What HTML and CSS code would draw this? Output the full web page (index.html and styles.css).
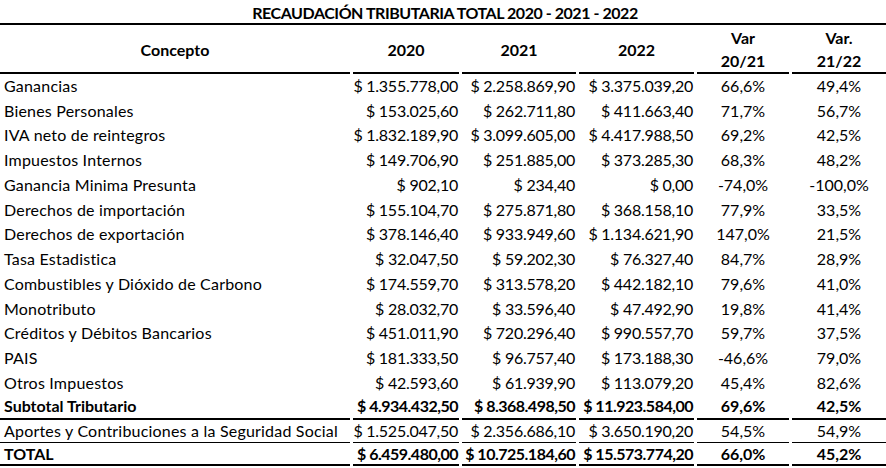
FILE: index.html
```html
<!DOCTYPE html>
<html lang="es">
<head>
<meta charset="utf-8">
<title>Recaudación Tributaria</title>
<link rel="stylesheet" href="styles.css">
</head>
<body>
<div class="sheet">
  <div class="title">RECAUDACIÓN TRIBUTARIA TOTAL 2020 - 2021 - 2022</div>
  <div class="row head">
    <div class="c concept">Concepto</div>
    <div class="c">2020</div>
    <div class="c">2021</div>
    <div class="c">2022</div>
    <div class="c"><span>Var</span><span>20/21</span></div>
    <div class="c"><span>Var.</span><span>21/22</span></div>
  </div>
  <div class="row"><div class="c label">Ganancias</div><div class="c num">$ 1.355.778,00</div><div class="c num">$ 2.258.869,90</div><div class="c num">$ 3.375.039,20</div><div class="c pct">66,6%</div><div class="c pct">49,4%</div></div>
  <div class="row"><div class="c label">Bienes Personales</div><div class="c num">$ 153.025,60</div><div class="c num">$ 262.711,80</div><div class="c num">$ 411.663,40</div><div class="c pct">71,7%</div><div class="c pct">56,7%</div></div>
  <div class="row"><div class="c label">IVA neto de reintegros</div><div class="c num">$ 1.832.189,90</div><div class="c num">$ 3.099.605,00</div><div class="c num">$ 4.417.988,50</div><div class="c pct">69,2%</div><div class="c pct">42,5%</div></div>
  <div class="row"><div class="c label">Impuestos Internos</div><div class="c num">$ 149.706,90</div><div class="c num">$ 251.885,00</div><div class="c num">$ 373.285,30</div><div class="c pct">68,3%</div><div class="c pct">48,2%</div></div>
  <div class="row"><div class="c label">Ganancia Minima Presunta</div><div class="c num">$ 902,10</div><div class="c num">$ 234,40</div><div class="c num">$ 0,00</div><div class="c pct">-74,0%</div><div class="c pct">-100,0%</div></div>
  <div class="row"><div class="c label">Derechos de importación</div><div class="c num">$ 155.104,70</div><div class="c num">$ 275.871,80</div><div class="c num">$ 368.158,10</div><div class="c pct">77,9%</div><div class="c pct">33,5%</div></div>
  <div class="row"><div class="c label">Derechos de exportación</div><div class="c num">$ 378.146,40</div><div class="c num">$ 933.949,60</div><div class="c num">$ 1.134.621,90</div><div class="c pct">147,0%</div><div class="c pct">21,5%</div></div>
  <div class="row"><div class="c label">Tasa Estadistica</div><div class="c num">$ 32.047,50</div><div class="c num">$ 59.202,30</div><div class="c num">$ 76.327,40</div><div class="c pct">84,7%</div><div class="c pct">28,9%</div></div>
  <div class="row"><div class="c label">Combustibles y Dióxido de Carbono</div><div class="c num">$ 174.559,70</div><div class="c num">$ 313.578,20</div><div class="c num">$ 442.182,10</div><div class="c pct">79,6%</div><div class="c pct">41,0%</div></div>
  <div class="row"><div class="c label">Monotributo</div><div class="c num">$ 28.032,70</div><div class="c num">$ 33.596,40</div><div class="c num">$ 47.492,90</div><div class="c pct">19,8%</div><div class="c pct">41,4%</div></div>
  <div class="row"><div class="c label">Créditos y Débitos Bancarios</div><div class="c num">$ 451.011,90</div><div class="c num">$ 720.296,40</div><div class="c num">$ 990.557,70</div><div class="c pct">59,7%</div><div class="c pct">37,5%</div></div>
  <div class="row"><div class="c label">PAIS</div><div class="c num">$ 181.333,50</div><div class="c num">$ 96.757,40</div><div class="c num">$ 173.188,30</div><div class="c pct">-46,6%</div><div class="c pct">79,0%</div></div>
  <div class="row"><div class="c label">Otros Impuestos</div><div class="c num">$ 42.593,60</div><div class="c num">$ 61.939,90</div><div class="c num">$ 113.079,20</div><div class="c pct">45,4%</div><div class="c pct">82,6%</div></div>
  <div class="row subtotal"><div class="c label">Subtotal Tributario</div><div class="c num">$ 4.934.432,50</div><div class="c num">$ 8.368.498,50</div><div class="c num">$ 11.923.584,00</div><div class="c pct">69,6%</div><div class="c pct">42,5%</div></div>
  <div class="row aportes"><div class="c label">Aportes y Contribuciones a la Seguridad Social</div><div class="c num">$ 1.525.047,50</div><div class="c num">$ 2.356.686,10</div><div class="c num">$ 3.650.190,20</div><div class="c pct">54,5%</div><div class="c pct">54,9%</div></div>
  <div class="row total"><div class="c label">TOTAL</div><div class="c num">$ 6.459.480,00</div><div class="c num">$ 10.725.184,60</div><div class="c num">$ 15.573.774,20</div><div class="c pct">66,0%</div><div class="c pct">45,2%</div></div>
</div>
</body>
</html>
```

FILE: styles.css
```css
* { box-sizing: border-box; }
html, body { margin: 0; padding: 0; background: #fff; }
body {
  font-family: "Lato", "Liberation Sans", sans-serif;
  font-size: 16px;
  color: #000;
}
.sheet { width: 886px; }
.title {
  height: 25px;
  border-bottom: 2px solid #000;
  text-align: center;
  font-weight: bold;
  line-height: 25px;
  letter-spacing: -0.45px;
  padding-left: 4px;
}
.row {
  display: grid;
  grid-template-columns: 350px 106px 114px 115px 92px 94px;
  column-gap: 3px;
  height: 24.75px;
}
.c {
  display: flex;
  align-items: flex-end;
  padding-bottom: 2px;
  white-space: nowrap;
  line-height: 20px;
}
.label { padding-left: 4px; letter-spacing: 0.2px; }
.num { justify-content: flex-end; padding-right: 1px; letter-spacing: -0.25px; }
.pct { justify-content: center; }
.head { height: 48px; font-weight: bold; }
.head .c {
  border-bottom: 2px solid #000;
  flex-direction: column;
  align-items: center;
  justify-content: center;
  padding: 1px 0 0;
  line-height: 23px;
}
.subtotal { height: 25px; font-weight: bold; }
.subtotal .c { border-bottom: 2px solid #000; padding-bottom: 2px; }
.aportes { height: 23.5px; }
.aportes .c { border-bottom: 1px solid #000; padding-bottom: 1px; }
.total { height: 23px; font-weight: bold; }
.total .c { border-bottom: 2px solid #000; padding-bottom: 0; }
.subtotal .label, .total .label { letter-spacing: 0; }
.subtotal .num, .total .num { letter-spacing: -0.5px; }
```
